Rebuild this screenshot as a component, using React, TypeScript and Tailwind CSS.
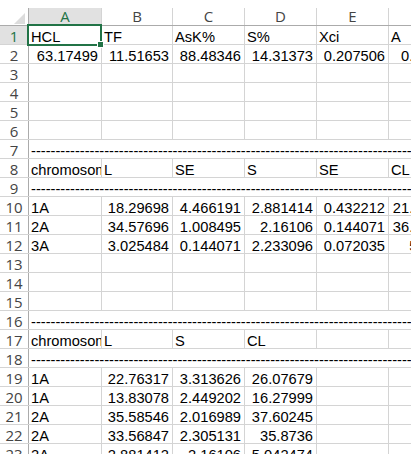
import React from 'react';

type C = { v?: string; num?: boolean };
type Row = { n: number; dash?: boolean; cells?: C[] };

const W = ['w-[73px]', 'w-[71px]', 'w-[72px]', 'w-[72px]', 'w-[72px]', 'w-[69px]'];
const HEAD = ['A', 'B', 'C', 'D', 'E', 'F'];

const t = (v: string): C => ({ v });
const n = (v: string): C => ({ v, num: true });
const e: C = {};

const rows: Row[] = [
  { n: 1, cells: [t('HCL'), t('TF'), t('AsK%'), t('S%'), t('Xci'), t('A')] },
  { n: 2, cells: [n('63.17499'), n('11.51653'), n('88.48346'), n('14.31373'), n('0.207506'), n('0.35431')] },
  { n: 3, cells: [e, e, e, e, e, e] },
  { n: 4, cells: [e, e, e, e, e, e] },
  { n: 5, cells: [e, e, e, e, e, e] },
  { n: 6, cells: [e, e, e, e, e, e] },
  { n: 7, dash: true },
  { n: 8, cells: [t('chromosome'), t('L'), t('SE'), t('S'), t('SE'), t('CL')] },
  { n: 9, dash: true },
  { n: 10, cells: [t('1A'), n('18.29698'), n('4.466191'), n('2.881414'), n('0.432212'), n('21.17839')] },
  { n: 11, cells: [t('2A'), n('34.57696'), n('1.008495'), n('2.16106'), n('0.144071'), n('36.72103')] },
  { n: 12, cells: [t('3A'), n('3.025484'), n('0.144071'), n('2.233096'), n('0.072035'), n('5.2581')] },
  { n: 13, cells: [e, e, e, e, e, e] },
  { n: 14, cells: [e, e, e, e, e, e] },
  { n: 15, cells: [e, e, e, e, e, e] },
  { n: 16, dash: true },
  { n: 17, cells: [t('chromosome'), t('L'), t('S'), t('CL'), e, e] },
  { n: 18, dash: true },
  { n: 19, cells: [t('1A'), n('22.76317'), n('3.313626'), n('26.07679'), e, e] },
  { n: 20, cells: [t('1A'), n('13.83078'), n('2.449202'), n('16.27999'), e, e] },
  { n: 21, cells: [t('2A'), n('35.58546'), n('2.016989'), n('37.60245'), e, e] },
  { n: 22, cells: [t('2A'), n('33.56847'), n('2.305131'), n('35.8736'), e, e] },
  { n: 23, cells: [t('2A'), n('2.881412'), n('2.16106'), n('5.042474'), e, e] },
];

const DASH = '-'.repeat(140);

function RowHead({ num }: { num: number }) {
  const sel = num === 1;
  return (
    <div
      className={`w-[29px] shrink-0 h-full border-r border-[#ababab] flex items-center justify-center pt-[1px] leading-[18px] text-[15px] ${
        sel ? 'bg-[#e1e1e1] text-[#217346]' : 'bg-white text-[#444444]'
      }`}
      style={{ fontFamily: '"Open Sans", sans-serif' }}
    >
      {num}
    </div>
  );
}

export default function App() {
  return (
    <div
      className="relative w-[411px] h-[454px] overflow-hidden bg-white text-black"
      style={{ fontFamily: '"Liberation Sans", Arial, sans-serif' }}
    >
      <div className="w-[600px]">
        <div className="h-[8px] bg-white" />
        {/* column headers */}
        <div
          className="flex h-[18px] border-b border-[#ababab] text-[15px] leading-[17px]"
          style={{ fontFamily: '"Open Sans", sans-serif' }}
        >
          <div className="w-[29px] shrink-0 h-full border-r border-[#ababab] flex items-end justify-end pr-[3px] pb-[1px]">
            <svg width="11" height="11" viewBox="0 0 11 11">
              <polygon points="0,11 11,11 11,0" fill="#dcdcdc" />
            </svg>
          </div>
          {HEAD.map((h, i) => (
            <div
              key={h}
              className={`${W[i]} shrink-0 h-full border-r border-[#d4d4d4] flex items-center justify-center ${
                i === 0 ? 'bg-[#e1e1e1] text-[#217346]' : 'bg-white text-[#444444]'
              }`}
            >
              {h}
            </div>
          ))}
        </div>
        {rows.map((r) => (
          <div key={r.n} className="flex h-[19px] border-b border-[#d4d4d4] text-[14.67px]">
            <RowHead num={r.n} />
            {r.dash ? (
              <div className="flex-1 h-full overflow-hidden whitespace-nowrap pl-[2px] pt-[3px] leading-[16px]">
                {DASH}
              </div>
            ) : (
              r.cells!.map((c, i) => (
                <div
                  key={i}
                  className={`${W[i]} shrink-0 h-full border-r border-[#d4d4d4] overflow-hidden whitespace-nowrap pt-[3px] leading-[16px] ${
                    c.num ? 'text-right pr-[3px]' : 'text-left pl-[2px]'
                  }`}
                >
                  {c.v ?? ''}
                </div>
              ))
            )}
          </div>
        ))}
      </div>
      {/* selection */}
      <div className="absolute left-[27px] top-[24px] w-[75px] h-[22px] border-2 border-[#217346]" />
      <div className="absolute left-[97px] top-[41px] w-[7px] h-[7px] bg-[#217346] border border-white" />
    </div>
  );
}
